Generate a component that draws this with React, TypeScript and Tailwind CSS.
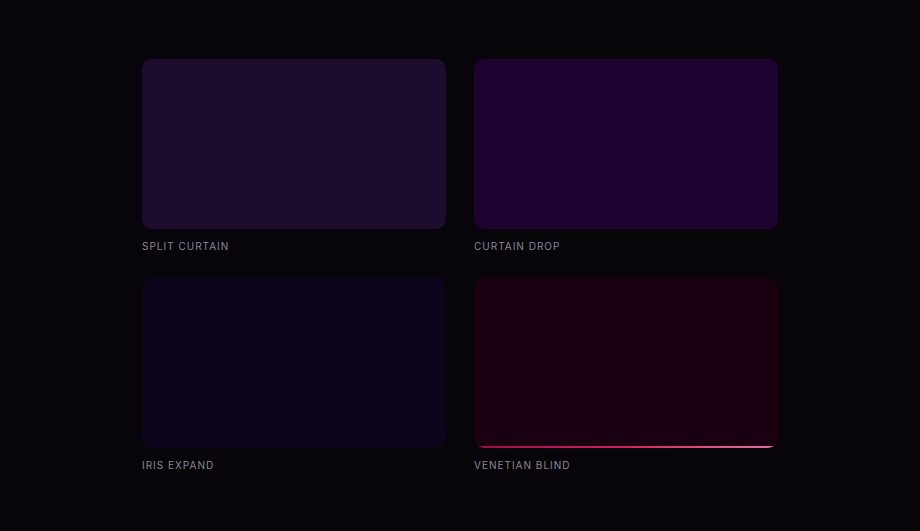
export default function App() {
  const cards = [
    { label: "SPLIT CURTAIN", bg: "bg-[#1c0d2f]" },
    { label: "CURTAIN DROP", bg: "bg-[#1e0330]" },
    { label: "IRIS EXPAND", bg: "bg-[#0b041b]" },
    { label: "VENETIAN BLIND", bg: "bg-[#1a0112]", line: true },
  ];
  return (
    <div className="min-h-[531px] w-full bg-[#07050a] pt-[59px]" style={{ fontFamily: "Inter, 'Liberation Sans', sans-serif" }}>
      <div className="mx-auto grid w-[636px] grid-cols-2 gap-x-[28px] gap-y-[25px]">
        {cards.map((c) => (
          <div key={c.label}>
            <div className={`relative h-[170px] w-[304px] overflow-hidden rounded-[10px] ${c.bg}`}>
              {c.line && (
                <div className="absolute bottom-0 left-[4px] right-[4px] h-[2px] bg-gradient-to-r from-[#9a1048] via-[#d0205e] to-[#e070a0]" />
              )}
            </div>
            <div className="mt-[10px] text-[10px] leading-[14px] tracking-[0.1em] text-[#8b8796]">{c.label}</div>
          </div>
        ))}
      </div>
    </div>
  );
}
